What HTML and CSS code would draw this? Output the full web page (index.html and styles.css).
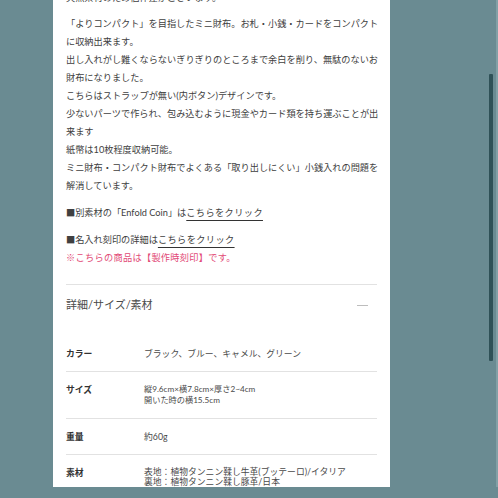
FILE: index.html
```html
<!DOCTYPE html>
<html lang="ja">
<head>
<meta charset="utf-8">
<title>Enfold</title>
<link rel="stylesheet" href="styles.css">
</head>
<body>
<div class="page">
  <main class="panel">
    <p class="para first">天然素材のため個体差がございます。</p>
    <p class="para">「よりコンパクト」を目指したミニ財布。お札・小銭・カードをコンパクト<br>に収納出来ます。<br>出し入れがし難くならないぎりぎりのところまで余白を削り、無駄のないお<br>財布になりました。<br>こちらはストラップが無い(内ボタン)デザインです。<br>少ないパーツで作られ、包み込むように現金やカード類を持ち運ぶことが出<br>来ます<br>紙幣は10枚程度収納可能。<br>ミニ財布・コンパクト財布でよくある「取り出しにくい」小銭入れの問題を<br>解消しています。</p>
    <p class="para">■別素材の「Enfold Coin」は<span class="link">こちらをクリック</span></p>
    <p class="para">■名入れ刻印の詳細は<span class="link">こちらをクリック</span><br><span class="notice">※こちらの商品は【製作時刻印】です。</span></p>

    <section class="details">
      <div class="details-head">
        <span class="details-title">詳細/サイズ/素材</span>
        <span class="dash"></span>
      </div>
      <div class="spec">
        <div class="row">
          <div class="label">カラー</div>
          <div class="value">ブラック、ブルー、キャメル、グリーン</div>
        </div>
        <div class="row">
          <div class="label">サイズ</div>
          <div class="value small">縦9.6cm×横7.8cm×厚さ2~4cm<br>開いた時の横15.5cm</div>
        </div>
        <div class="row">
          <div class="label">重量</div>
          <div class="value">約60g</div>
        </div>
        <div class="row">
          <div class="label">素材</div>
          <div class="value tight">表地：植物タンニン鞣し牛革(ブッテーロ)/イタリア<br>裏地：植物タンニン鞣し豚革/日本</div>
        </div>
      </div>
    </section>
  </main>
  <div class="scrollbar"></div>
  <div class="edge"></div>
</div>
</body>
</html>
```
FILE: styles.css
```css
html, body {
  margin: 0;
  padding: 0;
  height: 100%;
  overflow: hidden;
}
body {
  background: #6a8b92;
  font-family: Lato, "Noto Sans CJK JP", sans-serif;
  color: #404040;
}
.page {
  position: relative;
  height: 100%;
}
.panel {
  margin-left: 53px;
  width: 311px;
  padding: 0 13px;
  background: #ffffff;
  height: 100%;
  box-sizing: content-box;
}
.para {
  margin: 9px 0 0;
  font-size: 9.2px;
  line-height: 18px;
  white-space: nowrap;
}
.para.first {
  margin-top: -11px;
  margin-bottom: -1px;
}
.link {
  color: #404040;
  text-decoration: underline;
  text-decoration-color: #333;
  text-decoration-thickness: 1px;
  text-underline-offset: 4px;
  letter-spacing: 0.4px;
}
.notice {
  color: #e24a76;
  letter-spacing: 0.3px;
}
.details {
  margin-top: 17px;
  border-top: 1px solid #e2e2e2;
}
.details-head {
  display: flex;
  align-items: center;
  justify-content: space-between;
  padding-top: 12px;
  height: 16px;
}
.details-title {
  font-size: 11px;
  line-height: 16px;
  color: #4a4a4a;
}
.dash {
  width: 11px;
  height: 1px;
  background: #bdbdbd;
  margin-right: 9px;
}
.spec {
  margin-top: 23px;
}
.row {
  display: grid;
  grid-template-columns: 78px 1fr;
  padding: 12px 0;
  border-bottom: 1px solid #e2e2e2;
  font-size: 8.8px;
  line-height: 11px;
}
.row:last-child {
  border-bottom: none;
}
.label {
  font-weight: 700;
  color: #333;
}
.value {
  color: #4a4a4a;
  white-space: nowrap;
}
.value.small {
  font-size: 8.2px;
}
.value.tight {
  line-height: 10px;
}
.scrollbar {
  position: absolute;
  left: 489px;
  top: 85px;
  width: 4px;
  height: 287px;
  background: #2f5157;
  border-radius: 1px;
}
.edge {
  position: absolute;
  right: 0;
  top: 0;
  width: 2px;
  height: 100%;
  background: #82a0a6;
}
```
